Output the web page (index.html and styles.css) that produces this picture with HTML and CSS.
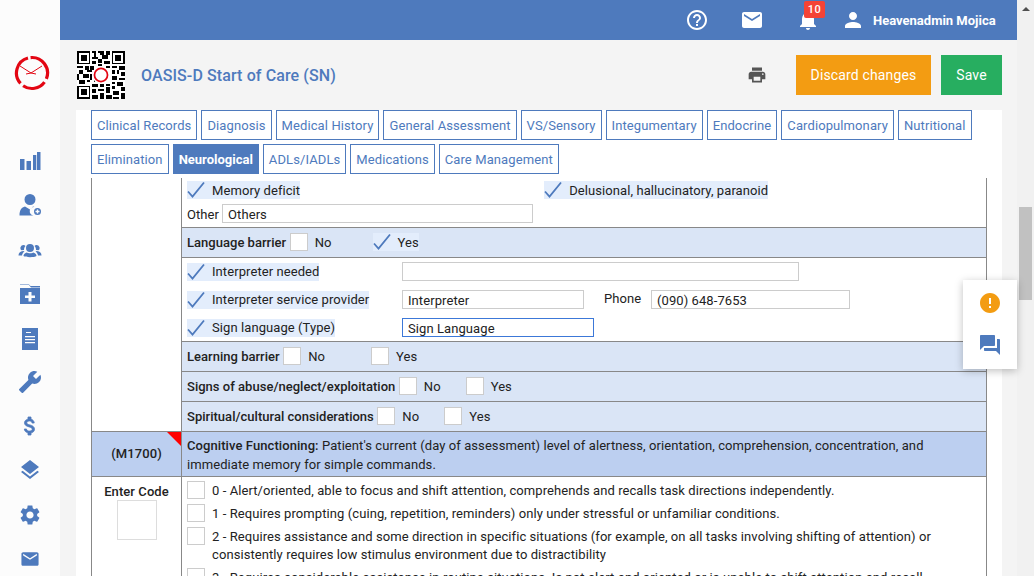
FILE: index.html
```html
<!DOCTYPE html>
<html lang="en">
<head>
    <meta charset="UTF-8">
    <title>OASIS-D Start of Care (SN)</title>
    <link rel="stylesheet" href="styles.css">
</head>
<body>
    <aside class="sidebar">
        <svg class="logo" viewBox="0 0 36 36">
            <path d="M16.600 2.600A15.500 15.500 0 0 1 32.400 23.800M30.500 27.100A15.500 15.500 0 0 1 9.100 30.700M6.500 28.400A15.500 15.500 0 0 1 14 3" fill="none" stroke="#e30613" stroke-width="3.200"/>
            <path d="M6 11L17 18L28 11M12 19L17 18L22 19" fill="none" stroke="#e30613" stroke-width="1"/>
        </svg>
        <nav class="side-nav">
            <svg viewBox="0 0 24 24"><path d="M2 10h4.500v11H2zM8.500 12H13v9H8.500zM15 6h3.300v15H15zM19 3h3.500v18H19z"/></svg>
            <svg viewBox="0 0 24 24"><path d="M12 12a5.500 5.500 0 1 0 0-11 5.500 5.500 0 0 0 0 11zM7 13.500C3.500 14.500 1.500 17 1.500 22.500h14a4 4 0 0 1 1-8.500L15 13.500l-3 3zM19.500 15a3.500 3.500 0 1 0 0 7 3.500 3.500 0 0 0 0-7zm-.7 1.500h1.400v1.300h1.300v1.400h-1.300v1.300h-1.400v-1.300h-1.300v-1.400h1.300z"/></svg>
            <svg viewBox="0 0 24 24"><path d="M12 7a4 4 0 1 0 0 8 4 4 0 0 0 0-8zM5.500 8a3 3 0 0 0-2 5.300l2.500-.3c0-2 .5-3 1.500-4a3 3 0 0 0-2-1zM18.500 8a3 3 0 0 0-2 1c1 1 1.500 2 1.500 4l2.500.3a3 3 0 0 0-2-5.300zM5 14c-3 .3-4.500 2-4.500 4.500H4c.3-1.700 1-3 2.500-4.200zM19 14l-1.500.3c1.500 1.200 2.200 2.500 2.500 4.200h3.500C23.500 16 22 14.300 19 14zM8.500 15.500c-2 .7-3 2.200-3 3.500 2 1.600 11 1.600 13 0 0-1.300-1-2.800-3-3.500-1 1-5.500 1-7 0z"/></svg>
            <svg viewBox="0 0 24 24"><path d="M2 3h9l2 2.500h9V4h-9.500L11 2.500H2zM2 6h20v16H2zm8.500 4v3.500H7v2.500h3.500v3.500h3V16H17v-2.500h-3.500V10z" fill-rule="evenodd"/></svg>
            <svg viewBox="0 0 24 24"><path d="M4 2h16v22H4zM8 6v1h5V6zM7 10v1.300h10V10zM7 13v1.300h10V13zM7 16v1.300h10V16z" fill-rule="evenodd"/></svg>
            <svg viewBox="0 0 24 24"><path transform="translate(24 0) scale(-1 1)" d="M22.700 19l-9.100-9.100c.9-2.300.4-5-1.500-6.900-2-2-5-2.400-7.400-1.300L9 6 6 9 1.600 4.700C.4 7.100.9 10.100 2.900 12.100c1.900 1.900 4.600 2.400 6.900 1.500l9.100 9.100c.4.400 1 .4 1.400 0l2.300-2.300c.5-.4.5-1.100.1-1.400z"/></svg>
            <svg class="dollar" viewBox="0 0 24 24"><path d="M11.800 10.900c-2.270-.59-3-1.200-3-2.150 0-1.090 1.010-1.850 2.700-1.850 1.780 0 2.440.85 2.500 2.100h2.210c-.07-1.720-1.120-3.300-3.210-3.810V3h-3v2.160c-1.940.42-3.500 1.680-3.500 3.610 0 2.310 1.910 3.460 4.700 4.130 2.500.6 3 1.480 3 2.410 0 .69-.49 1.790-2.700 1.790-2.060 0-2.870-.92-2.980-2.100h-2.200c.12 2.190 1.760 3.420 3.680 3.830V21h3v-2.150c1.950-.37 3.500-1.500 3.500-3.550 0-2.840-2.430-3.810-4.700-4.400z"/></svg>
            <svg viewBox="0 0 24 24"><path d="M11.990 18.540l-7.370-5.730L3 14.070l9 7 9-7-1.630-1.270-7.380 5.740zM12 16l7.360-5.730L21 9l-9-7-9 7 1.630 1.270L12 16z"/></svg>
            <svg viewBox="0 0 24 24"><path d="M19.140 12.940c.04-.3.06-.61.06-.94 0-.32-.02-.64-.07-.94l2.030-1.580c.18-.14.23-.41.12-.61l-1.920-3.320c-.12-.22-.37-.29-.59-.22l-2.390.96c-.5-.38-1.030-.7-1.620-.94l-.36-2.540c-.04-.24-.24-.41-.48-.41h-3.840c-.24 0-.43.17-.47.41l-.36 2.540c-.59.24-1.130.57-1.620.94l-2.390-.96c-.22-.08-.47 0-.59.22L2.740 8.870c-.12.21-.08.47.12.61l2.030 1.580c-.05.3-.09.63-.09.94s.02.64.07.94l-2.030 1.580c-.18.14-.23.41-.12.61l1.920 3.320c.12.22.37.29.59.22l2.390-.96c.5.38 1.030.7 1.620.94l.36 2.540c.05.24.24.41.48.41h3.840c.24 0 .44-.17.47-.41l.36-2.540c.59-.24 1.130-.56 1.620-.94l2.390.96c.22.08.47 0 .59-.22l1.920-3.320c.12-.22.07-.47-.12-.61l-2.010-1.580zM12 15.600c-1.980 0-3.600-1.620-3.600-3.600s1.620-3.600 3.600-3.600 3.600 1.620 3.600 3.600-1.620 3.600-3.600 3.600z"/></svg>
            <svg viewBox="-2 -2 28 28"><path d="M20 4H4c-1.100 0-1.990.9-1.990 2L2 18c0 1.100.9 2 2 2h16c1.100 0 2-.9 2-2V6c0-1.100-.9-2-2-2zm0 4l-8 5-8-5V6l8 5 8-5v2z"/></svg>
        </nav>
    </aside>

    <div class="main">
        <header class="topbar">
            <svg class="top-icon help" viewBox="0 0 24 24"><path d="M11 18h2v-2h-2v2zm1-16C6.480 2 2 6.480 2 12s4.480 10 10 10 10-4.480 10-10S17.520 2 12 2zm0 18c-4.410 0-8-3.590-8-8s3.590-8 8-8 8 3.590 8 8-3.590 8-8 8zm0-14c-2.210 0-4 1.790-4 4h2c0-1.100.9-2 2-2s2 .9 2 2c0 2-3 1.750-3 5h2c0-2.250 3-2.500 3-5 0-2.210-1.790-4-4-4z"/></svg>
            <svg class="top-icon mail" viewBox="0 0 24 24"><path d="M20 4H4c-1.100 0-1.990.9-1.990 2L2 18c0 1.100.9 2 2 2h16c1.100 0 2-.9 2-2V6c0-1.100-.9-2-2-2zm0 4l-8 5-8-5V6l8 5 8-5v2z"/></svg>
            <div class="bell">
                <svg class="top-icon" viewBox="0 0 24 24"><path d="M12 22c1.100 0 2-.9 2-2h-4c0 1.100.89 2 2 2zm6-6v-5c0-3.070-1.640-5.640-4.500-6.320V4c0-.83-.67-1.500-1.500-1.500s-1.500.67-1.500 1.500v.68C7.630 5.360 6 7.920 6 11v5l-2 2v1h16v-1l-2-2z"/></svg>
                <span class="badge">10</span>
            </div>
            <svg class="top-icon person" viewBox="0 0 24 24"><path d="M12 12c2.210 0 4-1.790 4-4s-1.790-4-4-4-4 1.790-4 4 1.790 4 4 4zm0 2c-2.670 0-8 1.340-8 4v2h16v-2c0-2.660-5.330-4-8-4z"/></svg>
            <span class="user-name">Heavenadmin Mojica</span>
        </header>

        <section class="page-head">
            <svg class="qr" viewBox="0 0 25 25" shape-rendering="crispEdges">
                <path d="M0 0h7v7H0zM1 1v5h5V1zM2 2h3v3H2zM18 0h7v7h-7zM19 1v5h5V1zM20 2h3v3h-3zM0 18h7v7H0zM1 19v5h5v-5zM2 20h3v3H2z" fill-rule="evenodd"/>
                <path d="M8 0h2v1H8zM11 0h3v1h-3zM15 0h2v2h-2zM9 1h1v2H9zM12 1h2v1h-2zM8 3h3v1H8zM13 2h3v2h-3zM8 5h2v2H8zM11 4h2v2h-2zM14 5h3v2h-3zM0 8h3v1H0zM4 8h2v2H4zM7 8h2v2H7zM11 7h2v1h-2zM15 8h2v1h-2zM18 8h3v1h-3zM22 8h3v2h-3zM1 10h2v2H1zM5 10h3v1H5zM18 10h2v2h-2zM21 10h1v2h-1zM23 11h2v2h-2zM0 12h1v3H0zM3 12h3v2H3zM7 12h1v3H7zM18 13h3v2h-3zM22 14h3v1h-3zM1 15h3v2H1zM5 15h2v1H5zM9 15h1v1H9zM18 16h2v1h-2zM21 16h3v2h-3zM8 17h3v2H8zM12 17h2v2h-2zM15 17h2v1h-2zM18 18h2v2h-2zM23 19h2v2h-2zM8 20h2v2H8zM11 20h3v1h-3zM15 19h2v3h-2zM19 21h3v2h-3zM12 22h2v3h-2zM8 23h3v2H8zM15 23h3v2h-3zM19 24h3v1h-3zM23 22h2v3h-2z"/>
                <circle cx="12.500" cy="12.500" r="4.600" fill="#fff" shape-rendering="auto"/>
                <circle cx="12.500" cy="12.500" r="3.400" fill="none" stroke="#e30613" stroke-width="0.900" shape-rendering="auto"/>
            </svg>
            <h1 class="page-title">OASIS-D Start of Care (SN)</h1>
            <svg class="print" viewBox="0 0 24 24"><path d="M19 8H5c-1.660 0-3 1.340-3 3v6h4v4h12v-4h4v-6c0-1.660-1.340-3-3-3zm-3 11H8v-5h8v5zm3-7c-.55 0-1-.45-1-1s.45-1 1-1 1 .45 1 1-.45 1-1 1zm-1-9H6v4h12V3z"/></svg>
            <button class="btn btn-discard">Discard changes</button>
            <button class="btn btn-save">Save</button>
        </section>

        <section class="panel">
            <div class="tabs">
                <a class="tab">Clinical Records</a>
                <a class="tab">Diagnosis</a>
                <a class="tab">Medical History</a>
                <a class="tab">General Assessment</a>
                <a class="tab">VS/Sensory</a>
                <a class="tab">Integumentary</a>
                <a class="tab">Endocrine</a>
                <a class="tab">Cardiopulmonary</a>
                <a class="tab">Nutritional</a>
                <a class="tab">Elimination</a>
                <a class="tab active">Neurological</a>
                <a class="tab">ADLs/IADLs</a>
                <a class="tab">Medications</a>
                <a class="tab">Care Management</a>
            </div>

            <table class="form-table">
                <colgroup><col class="col-code"><col></colgroup>
                <tr>
                    <td class="code-cell" rowspan="6"></td>
                    <td class="block block-top">
                        <div class="line two-col">
                            <label class="opt on"><svg class="tick" viewBox="0 0 18 18"><path d="M1 10.500L5.500 15.500L17 1.500"/></svg>Memory deficit</label>
                            <label class="opt on"><svg class="tick" viewBox="0 0 18 18"><path d="M1 10.500L5.500 15.500L17 1.500"/></svg>Delusional, hallucinatory, paranoid</label>
                        </div>
                        <div class="line other-line"><span class="other-label">Other</span> <input class="field field-other" value="Others"></div>
                    </td>
                </tr>
                <tr>
                    <td class="band">
                        <div class="band-row">
                            <b>Language barrier</b><span class="box"></span><span class="yn no-lang">No</span>
                            <label class="opt on"><svg class="tick" viewBox="0 0 18 18"><path d="M1 10.500L5.500 15.500L17 1.500"/></svg>Yes</label>
                        </div>
                    </td>
                </tr>
                <tr>
                    <td class="block block-lang">
                        <div class="lang-row">
                            <div class="lang-label"><label class="opt on"><svg class="tick" viewBox="0 0 18 18"><path d="M1 10.500L5.500 15.500L17 1.500"/></svg>Interpreter needed</label></div>
                            <input class="field field-long">
                        </div>
                        <div class="lang-row">
                            <div class="lang-label"><label class="opt on"><svg class="tick" viewBox="0 0 18 18"><path d="M1 10.500L5.500 15.500L17 1.500"/></svg>Interpreter service provider</label></div>
                            <input class="field field-mid" value="Interpreter">
                            <span class="phone-label">Phone</span>
                            <input class="field field-phone" value="(090) 648-7653">
                        </div>
                        <div class="lang-row">
                            <div class="lang-label"><label class="opt on"><svg class="tick" viewBox="0 0 18 18"><path d="M1 10.500L5.500 15.500L17 1.500"/></svg>Sign language (Type)</label></div>
                            <input class="field field-sign" value="Sign Language">
                        </div>
                    </td>
                </tr>
                <tr>
                    <td class="band">
                        <div class="band-row">
                            <b>Learning barrier</b><span class="box"></span><span class="yn no-wide">No</span><span class="box"></span><span class="yn">Yes</span>
                        </div>
                    </td>
                </tr>
                <tr>
                    <td class="band">
                        <div class="band-row">
                            <b>Signs of abuse/neglect/exploitation</b><span class="box"></span><span class="yn no-narrow">No</span><span class="box"></span><span class="yn">Yes</span>
                        </div>
                    </td>
                </tr>
                <tr>
                    <td class="band">
                        <div class="band-row">
                            <b>Spiritual/cultural considerations</b><span class="box"></span><span class="yn no-narrow">No</span><span class="box"></span><span class="yn">Yes</span>
                        </div>
                    </td>
                </tr>
                <tr class="head-row">
                    <td class="m-code">(M1700)<span class="flag"></span></td>
                    <td class="m-text"><b>Cognitive Functioning:</b> Patient's current (day of assessment) level of alertness, orientation, comprehension, concentration, and immediate memory for simple commands.</td>
                </tr>
                <tr>
                    <td class="enter-cell"><b>Enter Code</b><div class="code-box"></div></td>
                    <td class="answers">
                        <div class="answer"><span class="box"></span><p>0 - Alert/oriented, able to focus and shift attention, comprehends and recalls task directions independently.</p></div>
                        <div class="answer"><span class="box"></span><p>1 - Requires prompting (cuing, repetition, reminders) only under stressful or unfamiliar conditions.</p></div>
                        <div class="answer"><span class="box"></span><p>2 - Requires assistance and some direction in specific situations (for example, on all tasks involving shifting of attention) or consistently requires low stimulus environment due to distractibility</p></div>
                        <div class="answer"><span class="box"></span><p>3 - Requires considerable assistance in routine situations. Is not alert and oriented or is unable to shift attention and recall directions more than half of the time.</p></div>
                    </td>
                </tr>
            </table>
        </section>
    </div>

    <div class="scrollbar">
        <span class="arrow-up"></span>
        <span class="thumb"></span>
    </div>

    <div class="float-tools">
        <svg class="warn" viewBox="0 0 24 24"><path d="M12 2C6.480 2 2 6.480 2 12s4.480 10 10 10 10-4.480 10-10S17.520 2 12 2zm1 15h-2v-2h2v2zm0-4h-2V7h2v6z"/></svg>
        <svg class="chat" viewBox="0 0 24 24"><path d="M21 6h-2v9H6v2c0 .55.45 1 1 1h11l4 4V7c0-.55-.45-1-1-1zm-4 6V3c0-.55-.45-1-1-1H3c-.55 0-1 .45-1 1v14l4-4h10c.55 0 1-.45 1-1z"/></svg>
    </div>
</body>
</html>
```

FILE: styles.css
```css
* {
    box-sizing: border-box;
}

html,
body {
    height: 100%;
}

body {
    font-family: Roboto, sans-serif;
    font-size: 13px;
    letter-spacing: 0.08px;
    color: #222;
    margin: 0;
    display: flex;
    height: 576px;
    overflow: hidden;
    background-color: #f4f4f4;
}

/* sidebar */
.sidebar {
    width: 60px;
    flex-shrink: 0;
    background-color: #fcfcfc;
    display: flex;
    flex-direction: column;
    align-items: center;
}

.logo {
    width: 36px;
    height: 36px;
    margin-top: 55px;
    margin-left: 3px;
}

.side-nav {
    margin-top: 58px;
    display: flex;
    flex-direction: column;
    align-items: center;
    gap: 20.200px;
}

.side-nav svg {
    width: 24px;
    height: 24px;
    fill: #4e7abd;
}

.side-nav .dollar {
    stroke: #4e7abd;
    stroke-width: 0.800;
}

/* main column */
.main {
    width: 957px;
    flex-shrink: 0;
    display: flex;
    flex-direction: column;
}

.topbar {
    height: 40px;
    flex-shrink: 0;
    background-color: #4e7abd;
    display: flex;
    align-items: center;
    padding-right: 21px;
    padding-left: 625px;
}

.top-icon {
    width: 24px;
    height: 24px;
    fill: #fff;
    flex-shrink: 0;
}

.mail {
    margin-left: 31px;
}

.bell {
    position: relative;
    display: flex;
    margin-left: 32px;
}

.badge {
    position: absolute;
    left: 8px;
    top: -7px;
    width: 21px;
    height: 17px;
    background-color: #f44336;
    border-radius: 2px;
    color: #fff;
    font-size: 11px;
    font-weight: 500;
    line-height: 17px;
    text-align: center;
    letter-spacing: 0.5px;
}

.person {
    margin-left: 21px;
}

.user-name {
    margin-left: 8px;
    font-weight: 700;
    font-size: 13px;
    letter-spacing: 0;
    color: #fff;
    white-space: nowrap;
}

.page-head {
    height: 70px;
    flex-shrink: 0;
    display: flex;
    align-items: center;
    padding-left: 17px;
    padding-right: 15px;
}

.qr {
    width: 48px;
    height: 48px;
    background-color: #fff;
    margin-top: -1px;
}

.page-title {
    margin: 0 0 0 16px;
    font-size: 16px;
    font-weight: 500;
    letter-spacing: 0.1px;
    color: #4e7abd;
    flex-grow: 1;
}

.print {
    width: 20px;
    height: 20px;
    fill: #555;
    margin-right: 29px;
}

.btn {
    height: 40px;
    border: none;
    color: #fff;
    font-family: Roboto, sans-serif;
    font-size: 14px;
    letter-spacing: 0.15px;
    padding: 0;
}

.btn-discard {
    width: 135px;
    background-color: #f39c12;
}

.btn-save {
    width: 61px;
    margin-left: 10px;
    background-color: #27ae60;
}

/* white panel */
.panel {
    margin-left: 16px;
    margin-right: 15px;
    padding: 0 15px;
    background-color: #fff;
    flex-grow: 1;
    min-height: 0;
    overflow: hidden;
}

.tabs {
    display: flex;
    flex-wrap: wrap;
    align-content: flex-start;
    gap: 4px;
    width: 890px;
    height: 68px;
}

.tab {
    height: 30px;
    line-height: 30px;
    padding: 0 5px;
    border: 1px solid #4e7abd;
    color: #4e7abd;
    letter-spacing: 0.1px;
    white-space: nowrap;
}

.tab.active {
    background-color: #4e7abd;
    color: #fff;
    font-weight: 700;
    letter-spacing: 0;
}

.form-table {
    width: 896px;
    table-layout: fixed;
    border-collapse: collapse;
    border-spacing: 0;
}

.col-code {
    width: 90px;
}

.form-table td {
    border: 1px solid #888;
    padding: 0;
}

.form-table tr:first-child td {
    border-top: none;
}

.block {
    vertical-align: top;
}

.block-top {
    height: 49px;
    padding: 3px 5px 0 !important;
}

.line {
    display: flex;
    align-items: center;
}

.two-col .opt:first-child {
    margin-right: 244px;
}

.other-line {
    margin-top: 5px;
    gap: 3px;
}

.other-label {
    margin-top: 2px;
}

.opt {
    display: inline-flex;
    align-items: center;
    height: 18px;
    background-color: #e3edfc;
}

.tick {
    width: 18px;
    height: 18px;
    margin-right: 7px;
    fill: none;
    stroke: #4e7abd;
    stroke-width: 1.800;
}

.field {
    height: 19px;
    border: 1px solid #ccc;
    padding: 2px 5px 0;
    font-family: Roboto, sans-serif;
    font-size: 13px;
    letter-spacing: 0.08px;
    color: #222;
    outline: none;
}

.field-other {
    width: 311px;
}

.band {
    height: 30px;
    background-color: #dae5f6;
}

.band-row {
    display: flex;
    align-items: center;
    height: 29px;
    padding-left: 5px;
    white-space: nowrap;
}

.band b {
    font-weight: 500;
    letter-spacing: 0.02px;
}

.box {
    display: inline-block;
    width: 18px;
    height: 18px;
    background-color: #fff;
    border: 1px solid #ccc;
    margin-left: 3.500px;
    flex-shrink: 0;
}

.yn {
    margin-left: 7px;
}

.no-lang {
    margin-right: 41px;
}

.no-wide {
    margin-right: 42.500px;
}

.no-narrow {
    margin-right: 21.500px;
}

.block-lang {
    height: 84px;
    padding: 4px 0 0 5px !important;
}

.lang-row {
    display: flex;
    align-items: center;
    height: 19px;
    margin-bottom: 9px;
}

.lang-row:last-child {
    margin-bottom: 0;
}

.lang-label {
    width: 215px;
    flex-shrink: 0;
    margin-top: 4px;
}

.field-long {
    width: 397px;
}

.field-mid {
    width: 182px;
}

.phone-label {
    margin-left: 20px;
    margin-bottom: 2px;
    width: 47px;
}

.field-phone {
    width: 199px;
}

.field-sign {
    width: 192px;
    border-color: #3c78d8;
}

.m-code {
    position: relative;
    height: 45px;
    background-color: #bccff0;
    text-align: center;
    font-weight: 500;
}

.flag {
    position: absolute;
    top: 0;
    right: 0;
    border-top: 14px solid #f00;
    border-left: 14px solid transparent;
}

.m-text {
    background-color: #bccff0;
    padding: 3px 25px 0 5px !important;
    line-height: 19px;
}

.m-text b {
    font-weight: 500;
}

.enter-cell {
    vertical-align: top;
    text-align: center;
    padding-top: 7px !important;
}

.enter-cell b {
    font-weight: 500;
}

.code-box {
    width: 40px;
    height: 40px;
    margin: 1px auto 0;
    border: 1px solid #ddd;
}

.answers {
    vertical-align: top;
    padding: 4px 40px 0 5px !important;
}

.answer {
    display: flex;
    margin-bottom: 4px;
}

.answer .box {
    margin: 0 7px 0 0;
}

.answer p {
    margin: 0;
    padding-top: 1px;
    line-height: 18px;
}

/* scrollbar */
.scrollbar {
    position: relative;
    width: 17px;
    flex-shrink: 0;
    background-color: #f1f1f1;
}

.arrow-up {
    position: absolute;
    top: 7px;
    left: 5px;
    border-left: 4px solid transparent;
    border-right: 4px solid transparent;
    border-bottom: 4px solid #505050;
}

.thumb {
    position: absolute;
    top: 207px;
    left: 2px;
    width: 13px;
    height: 93px;
    background-color: #c1c1c1;
}

/* floating tools on the right */
.float-tools {
    position: absolute;
    top: 280px;
    left: 963px;
    width: 54px;
    height: 89px;
    background-color: #fff;
    box-shadow: 0 2px 8px rgba(0, 0, 0, 0.25);
    display: flex;
    flex-direction: column;
    align-items: center;
    padding-top: 11px;
    gap: 18px;
}

.warn {
    width: 24px;
    height: 24px;
    fill: #f39c12;
}

.chat {
    width: 24px;
    height: 24px;
    fill: #4e7abd;
}
```
